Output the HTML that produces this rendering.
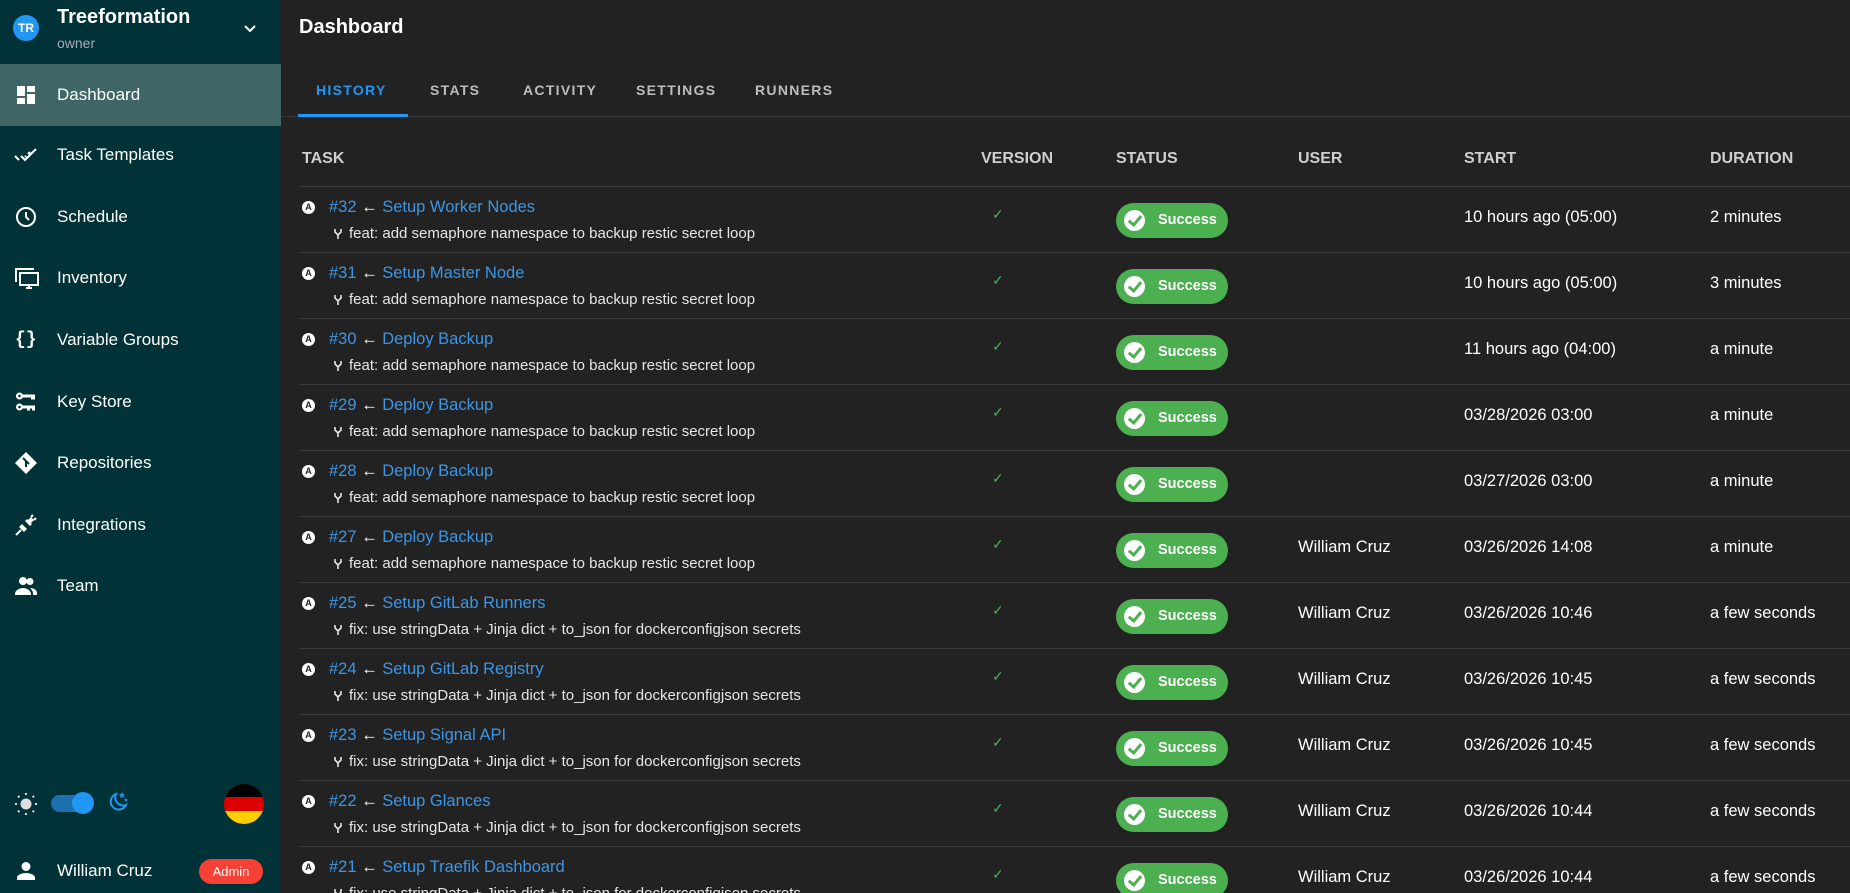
<!DOCTYPE html>
<html style="width:1850px;height:893px;overflow:hidden;background:#222"><head><meta charset="utf-8"><style>
*{margin:0;padding:0;box-sizing:border-box}
body{width:1850px;height:893px;overflow:hidden;background:#222;font-family:"Liberation Sans",sans-serif;color:#fff;position:relative}
.sb{position:absolute;left:0;top:0;width:281px;height:893px;background:#003237;border-right:1px solid #1a2a2c}
.abs{position:absolute}
.item{position:absolute;left:0;width:281px;height:62px;display:flex;align-items:center}
.item .t{position:absolute;left:57px;font-size:17px;color:#fff}
.item svg{position:absolute;left:14px}
.tab{position:absolute;top:82px;font-size:14px;letter-spacing:1.3px;color:#bdbdbd;font-weight:bold}
.th{position:absolute;top:150px;font-size:16px;font-weight:bold;color:#cfcfcf}
.row{position:absolute;left:299px;width:1551px;height:66px;border-bottom:1px solid #3a3a3a}
.row .ai{position:absolute;left:3px;top:14px;width:13px;height:13px;border-radius:50%;background:#fff;color:#222;font-size:9px;font-weight:bold;text-align:center;line-height:13px}
.row .ti{position:absolute;left:30px;top:11px;font-size:16.5px;color:#3c96e6;white-space:nowrap}
.row .ti span{color:#fff}
.row .fk{position:absolute;left:34px;top:41px}
.row .su{position:absolute;left:50px;top:38px;font-size:15px;color:#e6e6e6;white-space:nowrap}
.row .ck{position:absolute;left:693px;top:19px;color:#4caf50;font-size:14px}
.row .bd{position:absolute;left:817px;top:16px;width:112px;height:35px;border-radius:18px;background:#4caf50;font-size:14.5px;font-weight:bold;color:#fff;line-height:35px;padding-left:42px}
.row .bd i{position:absolute;left:8px;top:7px;width:21px;height:21px;border-radius:50%;background:#fff}
.row .bd i::after{content:"";position:absolute;left:7px;top:3px;width:5px;height:10px;border:solid #4caf50;border-width:0 3px 3px 0;transform:rotate(40deg)}
.row .c{position:absolute;top:21px;font-size:16.5px;color:#fff;white-space:nowrap}
</style></head><body>
<svg width="0" height="0" style="position:absolute"><defs><symbol id="fk" viewBox="0 0 10 12"><path d="M2 1v3l3 3 3-3V1M5 7v4" stroke="#e6e6e6" stroke-width="1.6" fill="none"/></symbol></defs></svg>
<div class="sb">
 <div class="abs" style="left:13px;top:15px;width:26px;height:26px;border-radius:50%;background:#2196f3;font-size:12px;font-weight:bold;text-align:center;line-height:26px">TR</div>
 <div class="abs" style="left:57px;top:6px;font-size:20px;font-weight:bold">Treeformation</div>
 <div class="abs" style="left:57px;top:35px;font-size:14px;color:#aab">owner</div>
 <svg class="abs" style="left:242px;top:21px" width="16" height="16" viewBox="0 0 16 16"><path d="M3 5l5 5 5-5" stroke="#fff" stroke-width="2" fill="none"/></svg>
 <div class="item" style="top:64px;background:#3f6566"><svg width="24" height="24" viewBox="0 0 24 24"><path fill="#fff" d="M3 13h8V3H3zm0 8h8v-6H3zm10 0h8V11h-8zm0-18v6h8V3z"/></svg><span class="t">Dashboard</span></div>
 <div class="item" style="top:124px"><svg width="24" height="24" viewBox="0 0 24 24"><path fill="none" stroke="#fff" stroke-width="2" d="M1 13l4 4M7 13l4 4L22 6M12 13l-1 1M16 9l-2 2"/></svg><span class="t">Task Templates</span></div>
 <div class="item" style="top:186px"><svg width="24" height="24" viewBox="0 0 24 24"><circle cx="12" cy="12" r="9" stroke="#fff" stroke-width="2" fill="none"/><path d="M12 7v5l3 3" stroke="#fff" stroke-width="2" fill="none"/></svg><span class="t">Schedule</span></div>
 <div class="item" style="top:247px"><svg width="26" height="24" viewBox="0 0 26 24"><path fill="none" stroke="#fff" stroke-width="2" d="M2 16V3h18M6 7h18v12H6zM12 22h6M15 19v3"/></svg><span class="t">Inventory</span></div>
 <div class="item" style="top:309px"><span class="abs" style="left:15px;font-size:18px;font-weight:bold;font-family:'Liberation Mono',monospace">{}</span><span class="t">Variable Groups</span></div>
 <div class="item" style="top:371px"><svg width="24" height="24" viewBox="0 0 24 24"><g fill="#fff"><circle cx="5.5" cy="6" r="3.5"/><circle cx="5.5" cy="17" r="3.5"/><rect x="8" y="4.5" width="13" height="3"/><rect x="17" y="4.5" width="4" height="5"/><rect x="8" y="15.5" width="13" height="3"/><rect x="13" y="15.5" width="3" height="5"/><rect x="18" y="15.5" width="3" height="5"/></g><circle cx="5.5" cy="6" r="1.3" fill="#003237"/><circle cx="5.5" cy="17" r="1.3" fill="#003237"/></svg><span class="t">Key Store</span></div>
 <div class="item" style="top:432px"><svg width="24" height="24" viewBox="0 0 24 24"><path fill="#fff" d="M12 1l11 11-11 11L1 12z"/><path d="M9 7l3 3v6M12 10l3 3" stroke="#003237" stroke-width="2" fill="none"/></svg><span class="t">Repositories</span></div>
 <div class="item" style="top:494px"><svg width="24" height="24" viewBox="0 0 24 24"><path fill="#fff" d="M8 11l5 5-3 3-5-5zM14 7l3-3 3 3-3 3zM11 8l5 5 2-2-5-5z"/><path stroke="#fff" stroke-width="2" d="M2 22l5-5M17 4l2-2M20 7l2-2"/></svg><span class="t">Integrations</span></div>
 <div class="item" style="top:555px"><svg width="24" height="24" viewBox="0 0 24 24"><path fill="#fff" d="M9 11a4 4 0 100-8 4 4 0 000 8zm7 0a3.5 3.5 0 100-7 3.5 3.5 0 000 7zM1 20c0-4 5-6 8-6s8 2 8 6v1H1zm15-6c3 0 7 1.5 7 5v2h-4v-1c0-2.5-1-4-3-6z"/></svg><span class="t">Team</span></div>
 <svg class="abs" style="left:13px;top:791px" width="26" height="26" viewBox="0 0 26 26"><circle cx="13" cy="13" r="5.5" fill="#ddd"/><g stroke="#ddd" stroke-width="2"><path d="M13 2v2M13 22v2M2 13h2M22 13h2M5 5l1.4 1.4M19.6 19.6L21 21M5 21l1.4-1.4M19.6 6.4L21 5"/></g></svg>
 <div class="abs" style="left:51px;top:795px;width:41px;height:17px;border-radius:9px;background:#1e6fb0"></div>
 <div class="abs" style="left:72px;top:792px;width:22px;height:22px;border-radius:50%;background:#2196f3"></div>
 <svg class="abs" style="left:106px;top:790px" width="24" height="24" viewBox="0 0 24 24"><path d="M10 4a8 8 0 1010 11A8 8 0 0110 4z" fill="none" stroke="#2196f3" stroke-width="2"/><path fill="#2196f3" d="M16 2l1 2 2 .5-1.5 1.5.3 2-1.8-1-1.8 1 .3-2L13 4.5 15 4zM20 8l.6 1.2 1.3.3-1 .9.2 1.3-1.1-.6-1.1.6.2-1.3-1-.9 1.3-.3z"/></svg>
 <div class="abs" style="left:224px;top:784px;width:40px;height:40px;border-radius:50%;overflow:hidden"><div style="height:13.3px;background:#000"></div><div style="height:13.4px;background:#dd0000"></div><div style="height:13.3px;background:#ffce00"></div></div>
 <svg class="abs" style="left:14px;top:859px" width="24" height="24" viewBox="0 0 24 24"><path fill="#fff" d="M12 12a4.5 4.5 0 100-9 4.5 4.5 0 000 9zm0 2c-3 0-9 1.5-9 4.5V21h18v-2.5c0-3-6-4.5-9-4.5z"/></svg>
 <div class="abs" style="left:57px;top:861px;font-size:17px">William Cruz</div>
 <div class="abs" style="left:199px;top:859px;width:64px;height:25px;border-radius:13px;background:#f44336;font-size:13px;text-align:center;line-height:25px">Admin</div>
</div>
<div class="abs" style="left:299px;top:16px;font-size:20px;font-weight:bold">Dashboard</div>
<div class="abs" style="left:281px;top:116px;width:1569px;height:1px;background:#3a3a3a"></div>
<div class="abs" style="left:298px;top:114px;width:110px;height:3px;background:#2196f3"></div>
<div class="tab" style="left:316px;color:#2196f3">HISTORY</div>
<div class="tab" style="left:430px">STATS</div>
<div class="tab" style="left:523px">ACTIVITY</div>
<div class="tab" style="left:636px">SETTINGS</div>
<div class="tab" style="left:755px">RUNNERS</div>
<div class="th" style="left:302px">TASK</div>
<div class="th" style="left:981px">VERSION</div>
<div class="th" style="left:1116px">STATUS</div>
<div class="th" style="left:1298px">USER</div>
<div class="th" style="left:1464px">START</div>
<div class="th" style="left:1710px">DURATION</div>
<div class="abs" style="left:299px;top:186px;width:1551px;height:1px;background:#3a3a3a"></div>
<div class="row" style="top:187px"><div class="ai">A</div><div class="ti">#32 <span>←</span> Setup Worker Nodes</div><svg class="fk" width="10" height="12"><use href="#fk"/></svg><div class="su">feat: add semaphore namespace to backup restic secret loop</div><div class="ck">✓</div><div class="bd"><i></i>Success</div><div class="c" style="left:1165px">10 hours ago (05:00)</div><div class="c" style="left:1411px">2 minutes</div></div>
<div class="row" style="top:253px"><div class="ai">A</div><div class="ti">#31 <span>←</span> Setup Master Node</div><svg class="fk" width="10" height="12"><use href="#fk"/></svg><div class="su">feat: add semaphore namespace to backup restic secret loop</div><div class="ck">✓</div><div class="bd"><i></i>Success</div><div class="c" style="left:1165px">10 hours ago (05:00)</div><div class="c" style="left:1411px">3 minutes</div></div>
<div class="row" style="top:319px"><div class="ai">A</div><div class="ti">#30 <span>←</span> Deploy Backup</div><svg class="fk" width="10" height="12"><use href="#fk"/></svg><div class="su">feat: add semaphore namespace to backup restic secret loop</div><div class="ck">✓</div><div class="bd"><i></i>Success</div><div class="c" style="left:1165px">11 hours ago (04:00)</div><div class="c" style="left:1411px">a minute</div></div>
<div class="row" style="top:385px"><div class="ai">A</div><div class="ti">#29 <span>←</span> Deploy Backup</div><svg class="fk" width="10" height="12"><use href="#fk"/></svg><div class="su">feat: add semaphore namespace to backup restic secret loop</div><div class="ck">✓</div><div class="bd"><i></i>Success</div><div class="c" style="left:1165px">03/28/2026 03:00</div><div class="c" style="left:1411px">a minute</div></div>
<div class="row" style="top:451px"><div class="ai">A</div><div class="ti">#28 <span>←</span> Deploy Backup</div><svg class="fk" width="10" height="12"><use href="#fk"/></svg><div class="su">feat: add semaphore namespace to backup restic secret loop</div><div class="ck">✓</div><div class="bd"><i></i>Success</div><div class="c" style="left:1165px">03/27/2026 03:00</div><div class="c" style="left:1411px">a minute</div></div>
<div class="row" style="top:517px"><div class="ai">A</div><div class="ti">#27 <span>←</span> Deploy Backup</div><svg class="fk" width="10" height="12"><use href="#fk"/></svg><div class="su">feat: add semaphore namespace to backup restic secret loop</div><div class="ck">✓</div><div class="bd"><i></i>Success</div><div class="c" style="left:999px">William Cruz</div><div class="c" style="left:1165px">03/26/2026 14:08</div><div class="c" style="left:1411px">a minute</div></div>
<div class="row" style="top:583px"><div class="ai">A</div><div class="ti">#25 <span>←</span> Setup GitLab Runners</div><svg class="fk" width="10" height="12"><use href="#fk"/></svg><div class="su">fix: use stringData + Jinja dict + to_json for dockerconfigjson secrets</div><div class="ck">✓</div><div class="bd"><i></i>Success</div><div class="c" style="left:999px">William Cruz</div><div class="c" style="left:1165px">03/26/2026 10:46</div><div class="c" style="left:1411px">a few seconds</div></div>
<div class="row" style="top:649px"><div class="ai">A</div><div class="ti">#24 <span>←</span> Setup GitLab Registry</div><svg class="fk" width="10" height="12"><use href="#fk"/></svg><div class="su">fix: use stringData + Jinja dict + to_json for dockerconfigjson secrets</div><div class="ck">✓</div><div class="bd"><i></i>Success</div><div class="c" style="left:999px">William Cruz</div><div class="c" style="left:1165px">03/26/2026 10:45</div><div class="c" style="left:1411px">a few seconds</div></div>
<div class="row" style="top:715px"><div class="ai">A</div><div class="ti">#23 <span>←</span> Setup Signal API</div><svg class="fk" width="10" height="12"><use href="#fk"/></svg><div class="su">fix: use stringData + Jinja dict + to_json for dockerconfigjson secrets</div><div class="ck">✓</div><div class="bd"><i></i>Success</div><div class="c" style="left:999px">William Cruz</div><div class="c" style="left:1165px">03/26/2026 10:45</div><div class="c" style="left:1411px">a few seconds</div></div>
<div class="row" style="top:781px"><div class="ai">A</div><div class="ti">#22 <span>←</span> Setup Glances</div><svg class="fk" width="10" height="12"><use href="#fk"/></svg><div class="su">fix: use stringData + Jinja dict + to_json for dockerconfigjson secrets</div><div class="ck">✓</div><div class="bd"><i></i>Success</div><div class="c" style="left:999px">William Cruz</div><div class="c" style="left:1165px">03/26/2026 10:44</div><div class="c" style="left:1411px">a few seconds</div></div>
<div class="row" style="top:847px"><div class="ai">A</div><div class="ti">#21 <span>←</span> Setup Traefik Dashboard</div><svg class="fk" width="10" height="12"><use href="#fk"/></svg><div class="su">fix: use stringData + Jinja dict + to_json for dockerconfigjson secrets</div><div class="ck">✓</div><div class="bd"><i></i>Success</div><div class="c" style="left:999px">William Cruz</div><div class="c" style="left:1165px">03/26/2026 10:44</div><div class="c" style="left:1411px">a few seconds</div></div>
</body></html>
